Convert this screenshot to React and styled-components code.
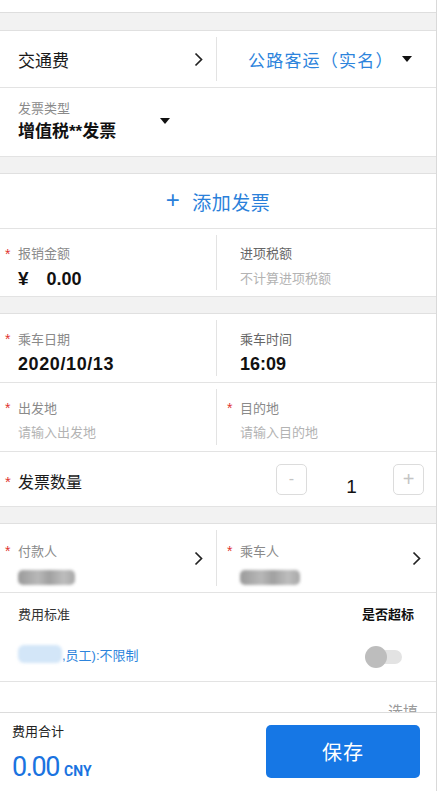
import React from 'react'
import styled, { createGlobalStyle } from 'styled-components'

const GlobalStyle = createGlobalStyle`
  html, body {
    margin: 0;
    padding: 0;
    background: #fff;
  }
  body {
    font-family: "Liberation Sans", "Noto Sans CJK SC", sans-serif;
    color: #1a1a1a;
  }
  * { box-sizing: border-box; }
`

const Page = styled.div`
  width: 437px;
  height: 791px;
  display: flex;
  flex-direction: column;
  overflow: hidden;
  border-right: 1px solid #d9d9d9;
`

const Scroll = styled.div`
  flex: 1;
  overflow: hidden;
`

const TopStub = styled.div`
  height: 13px;
  overflow: hidden;
  display: flex;
  justify-content: center;
  align-items: flex-end;
  border-bottom: 1px solid #dedede;
  span {
    font-size: 15px;
    line-height: 20px;
    margin-bottom: 10px;
    color: #c4c4c4;
  }
`

const Gap = styled.div`
  height: ${({ h }) => h}px;
  background: #f2f2f2;
  border-bottom: 1px solid #e0e0e0;
`

const Row = styled.div`
  display: flex;
  height: ${({ h }) => h}px;
  border-bottom: 1px solid #e3e3e3;
  background: #fff;
`

const Divider = styled.div`
  width: 1px;
  flex: none;
  margin: 6px 0;
  background: #e3e3e3;
`

const Cell = styled.div`
  flex: ${({ right }) => (right ? '1' : 'none')};
  width: ${({ right }) => (right ? 'auto' : '216px')};
  display: flex;
  align-items: center;
  padding-left: ${({ right }) => (right ? '23px' : '18px')};
  padding-right: ${({ right }) => (right ? '15px' : '13px')};
`

const Field = styled.div`
  flex: 1;
  display: flex;
  flex-direction: column;
  padding-top: 10px;
`

const Label = styled.div`
  display: flex;
  align-items: center;
  height: 18px;
  font-size: 13px;
  color: ${({ dark }) => (dark ? '#666' : '#8a8a8a')};
`

const Star = styled.span`
  width: 13px;
  margin-left: -13px;
  color: #e0342f;
  font-size: 14px;
  line-height: 18px;
  padding-top: 2px;
`

const Value = styled.div`
  margin-top: 4px;
  height: 26px;
  line-height: 26px;
  font-size: 18px;
  font-weight: bold;
  color: #111;
  letter-spacing: ${({ spaced }) => (spaced ? '0.6px' : '0')};
`

const Placeholder = styled.div`
  margin-top: 4px;
  height: 26px;
  line-height: 26px;
  font-size: 13px;
  color: #b3b3b3;
`

const Blur = styled.div`
  margin-top: 11px;
  width: ${({ w }) => w}px;
  height: 15px;
  border-radius: 5px;
  background: linear-gradient(90deg, #9a9a9a, #b8b8b8 35%, #a0a0a0 55%, #bdbdbd 80%, #a8a8a8);
  filter: blur(1.4px);
`

const Title = styled.span`
  flex: 1;
  font-size: 17px;
  color: #1a1a1a;
`

const BlueTitle = styled.span`
  flex: 1;
  padding-left: 8px;
  font-size: 17px;
  letter-spacing: 1.2px;
  color: #2d84dc;
`

const Caret = styled.span`
  width: 0;
  height: 0;
  border-left: 5px solid transparent;
  border-right: 5px solid transparent;
  border-top: 6px solid #111;
  margin-right: ${({ mr }) => mr || 0}px;
`

const TypeRow = styled(Row)`
  padding-left: 18px;
`

const TypeField = styled(Field)`
  flex: none;
  width: 142px;
`

const TypeValue = styled(Value)`
  font-size: 17px;
  margin-top: 3px;
`

const TypeCaret = styled.div`
  padding-top: 36px;
`

const AddRow = styled(Row)`
  justify-content: center;
  align-items: center;
  color: #2a80da;
  font-size: 19px;
  letter-spacing: 0.5px;
  span.plus {
    font-size: 24px;
    font-weight: 300;
    margin-right: 12px;
    margin-top: -2px;
  }
`

const Yen = styled.span`
  margin-right: 18px;
  font-size: 19px;
`

const CountRow = styled(Row)`
  align-items: center;
  padding-left: 18px;
  padding-right: 12px;
`

const CountLabel = styled.div`
  flex: 1;
  display: flex;
  align-items: center;
  font-size: 16px;
  color: #1a1a1a;
  padding-top: 3px;
  ${Star} { font-size: 15px; padding-top: 3px; }
`

const StepBtn = styled.div`
  width: 31px;
  height: 31px;
  border: 1px solid #dcdcdc;
  border-radius: 5px;
  display: flex;
  align-items: center;
  justify-content: center;
  color: #c4c4c4;
  font-size: ${({ big }) => (big ? 20 : 16)}px;
`

const Count = styled.div`
  width: 86px;
  text-align: center;
  font-size: 19px;
  padding-top: 15px;
  padding-left: 3px;
  color: #111;
`

const StandardSection = styled.div`
  height: 89px;
  border-bottom: 1px solid #e3e3e3;
  padding: 10px 22px 0 18px;
`

const StandardHead = styled.div`
  display: flex;
  justify-content: space-between;
  align-items: center;
  height: 20px;
  font-size: 13px;
  color: #333;
  b { color: #111; }
`

const StandardBody = styled.div`
  display: flex;
  align-items: center;
  justify-content: space-between;
  margin-top: 19px;
  height: 24px;
`

const RuleText = styled.div`
  display: flex;
  align-items: center;
  font-size: 13px;
  color: #2d84dc;
`

const BlueBlur = styled.div`
  width: 44px;
  height: 18px;
  border-radius: 6px;
  background: #d3e6f8;
  filter: blur(1.5px);
`

const Switch = styled.div`
  position: relative;
  width: 36px;
  height: 14px;
  border-radius: 7px;
  background: #e3e3e3;
  margin-right: 12px;
  margin-top: 6px;
  &::before {
    content: '';
    position: absolute;
    left: -1px;
    top: -4px;
    width: 22px;
    height: 22px;
    border-radius: 50%;
    background: #bdbdbd;
  }
`

const CutRow = styled.div`
  height: 56px;
  display: flex;
  justify-content: flex-end;
  align-items: center;
  padding-right: 18px;
  font-size: 15px;
  color: #9a9a9a;
`

const Footer = styled.div`
  flex: none;
  height: 79px;
  border-top: 1px solid #dcdcdc;
  display: flex;
  align-items: center;
  justify-content: space-between;
  padding: 0 16px 2px 12px;
  background: #fff;
`

const Total = styled.div`
  display: flex;
  flex-direction: column;
  padding-top: 1px;
`

const TotalLabel = styled.div`
  font-size: 13px;
  color: #222;
  line-height: 16px;
`

const TotalValue = styled.div`
  margin-top: 16px;
  display: flex;
  align-items: baseline;
  color: #1a73e0;
  span.num {
    font-family: Roboto, "Liberation Sans", sans-serif;
    font-size: 27px;
    letter-spacing: -1.4px;
    line-height: 22px;
  }
  span.unit {
    font-family: Roboto, "Liberation Sans", sans-serif;
    font-size: 14px;
    font-weight: bold;
    margin-left: 5px;
  }
`

const SaveButton = styled.button`
  width: 154px;
  height: 53px;
  border: none;
  border-radius: 5px;
  background: #1677e5;
  color: #fff;
  font-family: "Noto Sans CJK SC", sans-serif;
  font-size: 20px;
  letter-spacing: 1px;
  margin-top: 1px;
`

function Chevron() {
  return (
    <svg width="9" height="15" viewBox="0 0 9 15">
      <polyline points="1.5,1.5 7.5,7.5 1.5,13.5" fill="none" stroke="#222" strokeWidth="1.7" />
    </svg>
  )
}

export default function App() {
  return (
    <>
      <GlobalStyle />
      <Page>
        <Scroll>
          <TopStub><span>查看行程详情</span></TopStub>
          <Gap h={18} />

          <Row h={57}>
            <Cell>
              <Title>交通费</Title>
              <Chevron />
            </Cell>
            <Divider />
            <Cell right>
              <BlueTitle>公路客运（实名）</BlueTitle>
              <Caret mr={9} />
            </Cell>
          </Row>

          <TypeRow h={69}>
            <TypeField>
              <Label>发票类型</Label>
              <TypeValue>增值税**发票</TypeValue>
            </TypeField>
            <TypeCaret><Caret /></TypeCaret>
          </TypeRow>

          <Gap h={17} />

          <AddRow h={55}>
            <span className="plus">+</span>添加发票
          </AddRow>

          <Row h={68}>
            <Cell>
              <Field>
                <Label><Star>*</Star>报销金额</Label>
                <Value><Yen>¥</Yen>0.00</Value>
              </Field>
            </Cell>
            <Divider />
            <Cell right>
              <Field>
                <Label dark>进项税额</Label>
                <Placeholder>不计算进项税额</Placeholder>
              </Field>
            </Cell>
          </Row>

          <Gap h={17} />

          <Row h={69}>
            <Cell>
              <Field>
                <Label><Star>*</Star>乘车日期</Label>
                <Value spaced>2020/10/13</Value>
              </Field>
            </Cell>
            <Divider />
            <Cell right>
              <Field>
                <Label dark>乘车时间</Label>
                <Value>16:09</Value>
              </Field>
            </Cell>
          </Row>

          <Row h={69}>
            <Cell>
              <Field>
                <Label><Star>*</Star>出发地</Label>
                <Placeholder>请输入出发地</Placeholder>
              </Field>
            </Cell>
            <Divider />
            <Cell right>
              <Field>
                <Label><Star>*</Star>目的地</Label>
                <Placeholder>请输入目的地</Placeholder>
              </Field>
            </Cell>
          </Row>

          <CountRow h={55}>
            <CountLabel><Star>*</Star>发票数量</CountLabel>
            <StepBtn>-</StepBtn>
            <Count>1</Count>
            <StepBtn big>+</StepBtn>
          </CountRow>

          <Gap h={17} />

          <Row h={69}>
            <Cell>
              <Field>
                <Label><Star>*</Star>付款人</Label>
                <Blur w={57} />
              </Field>
              <Chevron />
            </Cell>
            <Divider />
            <Cell right>
              <Field>
                <Label><Star>*</Star>乘车人</Label>
                <Blur w={60} />
              </Field>
              <Chevron />
            </Cell>
          </Row>

          <StandardSection>
            <StandardHead>
              <span>费用标准</span>
              <b>是否超标</b>
            </StandardHead>
            <StandardBody>
              <RuleText>
                <BlueBlur />,员工):不限制
              </RuleText>
              <Switch />
            </StandardBody>
          </StandardSection>

          <CutRow>选填</CutRow>
        </Scroll>

        <Footer>
          <Total>
            <TotalLabel>费用合计</TotalLabel>
            <TotalValue>
              <span className="num">0.00</span>
              <span className="unit">CNY</span>
            </TotalValue>
          </Total>
          <SaveButton>保存</SaveButton>
        </Footer>
      </Page>
    </>
  )
}
